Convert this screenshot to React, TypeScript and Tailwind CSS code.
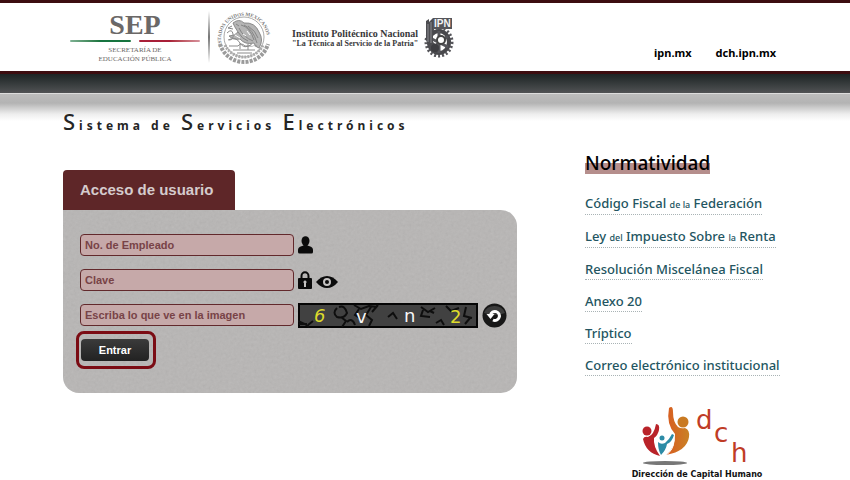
const topLinks = ["ipn.mx", "dch.ipn.mx"];

const fields = [
    { id: "empleado", label: "No. de Empleado", type: "text" },
    { id: "clave", label: "Clave", type: "password" },
    { id: "captcha", label: "Escriba lo que ve en la imagen", type: "text" },
];

const small = "text-[9px]";

const rules = [
    { id: "cff", text: <>Código Fiscal <span className={small}>de la</span> Federación</> },
    { id: "isr", text: <>Ley <span className={small}>del</span> Impuesto Sobre <span className={small}>la</span> Renta</> },
    { id: "rmf", text: <>Resolución Miscelánea Fiscal</> },
    { id: "anexo", text: <>Anexo 20</> },
    { id: "triptico", text: <>Tríptico</> },
    { id: "correo", text: <>Correo electrónico institucional</> },
];

function SepLogo() {
    return (
        <div className="flex w-[130px] flex-col items-center font-['Liberation_Serif',serif] text-[#6b6867]">
            <span className="text-[28px] leading-[30px] font-bold">SEP</span>
            <div className="mb-1 flex w-full gap-2">
                <span className="h-[2px] flex-1 rounded-full bg-linear-to-r from-[#7fb294] via-[#17743f] to-[#17743f]" />
                <span className="h-[2px] flex-1 rounded-full bg-linear-to-r from-[#a81f38] via-[#a81f38] to-[#d7929d]" />
            </div>
            <span className="text-[7px] leading-[9px]">SECRETARÍA DE</span>
            <span className="text-[7px] leading-[9px]">EDUCACIÓN PÚBLICA</span>
        </div>
    );
}

function Seal() {
    return (
        <svg viewBox="0 0 56 56" className="size-14" fill="none" stroke="#8a8a8a" aria-hidden="true">
            <defs>
                <path id="sealArc" d="M8.5 42 A23 23 0 1 1 47.5 42" />
            </defs>
            <text fill="#777" stroke="none" fontSize="5" fontWeight="bold" fontFamily="Liberation Serif, serif">
                <textPath href="#sealArc" startOffset="5">ESTADOS UNIDOS MEXICANOS</textPath>
            </text>
            <circle cx="28" cy="28" r="20" strokeWidth="1" stroke="#aaa" />
            {/* wreath */}
            <path d="M4 35 A25 25 0 0 0 52 35" strokeWidth="4" strokeDasharray="3 1.2" stroke="#9b9b9b" />
            <path d="M9 36 A21 21 0 0 0 47 36" strokeWidth="3" strokeDasharray="2 1" stroke="#aaa" />
            {/* eagle */}
            <path d="M17 14 q6 -5 11 0 q11 -1 15 9 q5 8 0 16 q-4 -1 -5 -5 q-9 2 -14 -4 q-7 1 -11 -3 q6 0 9 -4 q-4 -6 -5 -9z" fill="#b5b5b5" strokeWidth="1" />
            <path d="M16 17 l-4 2 5 1 M25 16 q9 2 13 15 M28 16 q9 4 13 18 M23 19 q4 9 14 13 M22 23 q4 7 10 9 M32 17 q8 5 10 12 M20 15 l3 2" strokeWidth="1" stroke="#858585" />
            <path d="M11 24 q5 -5 6 1 t-4 6 M12 31 q8 -4 12 3 t12 1 M13 37 h9 q3 -4 7 0 h12 M17 41 h22 M21 44 h15 M24 34 v6 M32 35 v6" strokeWidth="1" stroke="#8b8b8b" />
            <path d="M27 25 l3 2 M31 22 l3 4 M19 26 l5 3 M35 36 l4 2" stroke="#fff" strokeWidth="1" />
        </svg>
    );
}

function IpnGear() {
    return (
        <svg viewBox="0 0 30 42" className="h-[42px] w-[30px]" aria-hidden="true">
            <ellipse cx="15" cy="26" rx="13" ry="14" fill="none" stroke="#55555a" strokeWidth="3" strokeDasharray="2 2" />
            <ellipse cx="15" cy="26" rx="10" ry="11" fill="#fff" stroke="#48484c" strokeWidth="4" />
            <path d="M15 15 V37 M6 22 L24 31 M24 20 L7 33" stroke="#55555a" strokeWidth="3" />
            <circle cx="17" cy="24" r="4" fill="#fff" stroke="#444" strokeWidth="2" />
            <path d="M2 5 l3 -2 v3 l4 -4 v24 l5 4 -3 8 -6 -6 -3 -8z" fill="#4c4c50" />
            <path d="M4 8 v18 M7 6 v21" stroke="#8b8b90" />
            <circle cx="11" cy="32" r="4" fill="#3d3d41" />
            <rect x="9" y="2" width="19" height="11" fill="#55555a" />
            <text x="10" y="11" fontSize="10" fontWeight="bold" fontFamily="Liberation Sans, sans-serif" fill="#f4f4f4">IPN</text>
        </svg>
    );
}

function UserIcon() {
    return (
        <svg viewBox="0 0 15 18" className="h-[18px] w-[15px]" fill="#0b0b0b" aria-hidden="true">
            <ellipse cx="7.5" cy="5" rx="4" ry="4.800" />
            <path d="M5.500 8 h4 v1.500 l3.500 1.200 q2 .8 2 3 v2.300 q0 1.500 -1.500 1.500 h-12 q-1.500 0 -1.500 -1.500 v-2.300 q0 -2.200 2 -3 l3.500 -1.200z" />
        </svg>
    );
}

function LockIcon() {
    return (
        <svg viewBox="0 0 14 18" className="h-[18px] w-[14px]" aria-hidden="true">
            <path d="M3.500 9 V5 a3.500 3.800 0 0 1 7 0 V9" fill="none" stroke="#0b0b0b" strokeWidth="2" />
            <rect y="7" width="14" height="11" rx="1" fill="#0b0b0b" />
            <path d="M7 9.500 a1.600 1.600 0 0 1 1 2.800 V16 h-2 v-3.700 a1.600 1.600 0 0 1 1 -2.800z" fill="#c5c3c2" />
        </svg>
    );
}

function EyeIcon() {
    return (
        <svg viewBox="0 0 22 14" className="mt-1 h-[14px] w-[22px]" aria-hidden="true">
            <path d="M0 7 Q5 1 11 1 T22 7 Q17 13 11 13 T0 7z" fill="#0b0b0b" />
            <circle cx="11" cy="7" r="3" fill="none" stroke="#c5c3c2" strokeWidth="2" />
        </svg>
    );
}

function Captcha() {
    return (
        <svg viewBox="0 0 180 25" className="h-[25px] w-[180px]" role="img" aria-label="Imagen de verificación">
            <rect x="1" y="1" width="178" height="23" fill="#414141" stroke="#050505" strokeWidth="2" />
            <path
                d="M0 18 l7 3 4 3 M10 22 l5 -4 M39 5 q-5 5 0 9 q7 2 10 -4 q-2 -8 -8 -6 M43 14 l5 4 -4 6 M56 2 l7 4 8 -3 8 1 M61 6 l-4 6 6 4 M73 4 l-5 8 6 5 -3 6 M80 2 l-6 7 M49 19 q5 -5 8 3 M90 14 l5 -4 4 6 M123 4 l7 5 7 -4 M125 7 l-2 6 9 1 M132 8 l4 2 M148 3 l5 5 8 -3 M168 4 l-2 9 8 2 M172 15 l-5 6 M1 21 h8 M138 20 l5 -3 3 5"
                stroke="#0e0e0e"
                strokeWidth="2"
                fill="none"
            />
            <g fontFamily="DejaVu Sans, sans-serif" fontSize="18">
                <text x="16" y="19" fill="#dedb2c" fontStyle="italic">6</text>
                <text x="58" y="20" fill="#f8f8f8">v</text>
                <text x="106" y="19" fill="#f8f8f8">n</text>
                <text x="152" y="20" fill="#dedb2c">2</text>
            </g>
        </svg>
    );
}

function ReloadIcon() {
    return (
        <svg viewBox="0 0 25 25" className="size-[25px]" aria-hidden="true">
            <circle cx="12.5" cy="12.5" r="12" fill="#171717" />
            <path d="M2 10 a11 10 0 0 1 21 0 q-10 4 -21 0z" fill="#3c3c3c" />
            <path d="M11 17 a4.500 4.500 0 1 0 -2.500 -5" fill="none" stroke="#fff" strokeWidth="3" />
            <path d="M4.500 11 h8 l-4 5z" fill="#fff" />
        </svg>
    );
}

function DchLogo() {
    return (
        <svg viewBox="0 0 142 78" className="h-[78px] w-[142px]" role="img" aria-label="Dirección de Capital Humano">
            <defs>
                <linearGradient id="orange" x2="1">
                    <stop offset="0" stopColor="#d95b20" />
                    <stop offset="1" stopColor="#c98225" />
                </linearGradient>
            </defs>
            <ellipse cx="39" cy="61" rx="22" ry="2" fill="#777" />
            <path d="M43 6 q4 -3 4 4 q0 10 5 15 q3 2 7 1 q5 2 4 9 q-2 14 -23 18 q10 -8 9 -21 q-9 -10 -6 -26z" fill="url(#orange)" />
            <circle cx="57" cy="20" r="5.500" fill="#c97a22" />
            <path d="M30 22 q4 0 3 6 q-1 5 -5 8 q-1 8 6 18 q-14 -3 -17 -17 q1 -3 5 -2 q6 -2 8 -13z" fill="#b92329" />
            <circle cx="21" cy="29" r="4.500" fill="#b92329" />
            <path d="M46 32 l2 1 q-2 7 -7 9 q-1 6 -6 11 q-3 -5 -3 -13 q3 3 7 1 q4 -3 7 -9z" fill="#2c8ba6" />
            <circle cx="36" cy="36" r="2.500" fill="#2c8ba6" />
            <path d="M48 38 q0 10 -9 16" fill="none" stroke="#fff" strokeWidth="1" />
            <g fontFamily="DejaVu Sans, sans-serif" fontSize="26" fill="#bf3c26">
                <text x="70" y="27">d</text>
                <text x="88" y="40">c</text>
                <text x="105" y="60">h</text>
            </g>
            <text x="71" y="75" textAnchor="middle" fontFamily="DejaVu Sans, sans-serif" fontWeight="bold" fontSize="8" fill="#111">
                Dirección de Capital Humano
            </text>
        </svg>
    );
}

function LoginForm() {
    return (
        <section>
            <h2 className="flex h-10 w-[172px] items-center rounded-t bg-[#5e2628] pl-[17px] font-['Liberation_Sans',sans-serif] text-[15px] font-bold text-[#d5cbcd]">
                Acceso de usuario
            </h2>
            <form
                className="relative flex flex-col overflow-hidden rounded-2xl rounded-tl-none bg-[#b8b6b5] pt-[23px] pr-2 pb-6 pl-[17px] font-['Liberation_Sans',sans-serif]"
                onSubmit={(e) => e.preventDefault()}
            >
                {/* paper texture */}
                <svg className="pointer-events-none absolute inset-0 size-full opacity-15" aria-hidden="true">
                    <filter id="grain">
                        <feTurbulence type="fractalNoise" baseFrequency="0.35" numOctaves="2" />
                        <feColorMatrix type="saturate" values="0" />
                    </filter>
                    <rect width="100%" height="100%" filter="url(#grain)" />
                </svg>
                <div className="relative flex flex-col gap-[11px]">
                    {fields.map((field) => (
                        <div key={field.id} className="flex h-6 items-center gap-1">
                            <input
                                id={field.id}
                                type={field.type}
                                aria-label={field.label}
                                placeholder={field.label}
                                className="h-[22px] w-[214px] rounded border border-[#62292c] bg-[#c6a9a9] px-1 text-[11px] font-bold text-[#6f3034] placeholder:text-[#784347]"
                            />
                            {field.id === "empleado" && <UserIcon />}
                            {field.id === "clave" && (
                                <>
                                    <LockIcon />
                                    <EyeIcon />
                                </>
                            )}
                            {field.id === "captcha" && (
                                <>
                                    <Captcha />
                                    <button type="button" aria-label="Recargar imagen">
                                        <ReloadIcon />
                                    </button>
                                </>
                            )}
                        </div>
                    ))}
                </div>
                <div className="relative mt-1 -ml-1 flex w-20 rounded-lg border-3 border-[#7b0c14] px-[2px] py-[5px]">
                    <button type="submit" className="h-[22px] w-[68px] rounded bg-linear-to-b from-[#3b3b3b] to-[#222] text-[11px] font-bold text-white">
                        Entrar
                    </button>
                </div>
            </form>
        </section>
    );
}

export default function App() {
    return (
        <div className="min-h-screen bg-white font-['Noto_Sans',sans-serif] text-black">
            <header className="flex items-center justify-between border-t-3 border-b-3 border-[#3c0d10] pr-[74px] pl-[70px]">
                <div className="flex h-[68px] items-center">
                    <SepLogo />
                    <span className="ml-2 h-[52px] w-[2px] bg-linear-to-b from-white via-[#777] to-white" />
                    <div className="ml-[6px]">
                        <Seal />
                    </div>
                    <div className="ml-5 pt-1 text-right font-['Liberation_Serif',serif] font-bold text-[#38383a]">
                        <p className="text-[10px] leading-[10px]">Instituto Politécnico Nacional</p>
                        <p className="text-[8px] leading-[10px]">"La Técnica al Servicio de la Patria"</p>
                    </div>
                    <div className="ml-[6px]">
                        <IpnGear />
                    </div>
                </div>
                <nav className="flex gap-6 self-end pb-[10px] text-[11px] font-bold">
                    {topLinks.map((link) => (
                        <a key={link} href="#">{link}</a>
                    ))}
                </nav>
            </header>
            <div className="h-5 border-b border-[#ddd] bg-linear-to-b from-[#1d2424] to-[#515355]" />
            <div className="bg-[linear-gradient(to_bottom,#bdbdbd_0px,#b3b3b3_9px,#ededed_20px,#ffffff_27px)] pt-[13px] pl-[63px]">
                <h1 className="text-xs leading-7 font-bold tracking-[4px] text-[#252525]">
                    <span className="text-[22px] font-medium">S</span>istema de{" "}
                    <span className="text-[22px] font-medium">S</span>ervicios{" "}
                    <span className="text-[22px] font-medium">E</span>lectrónicos
                </h1>
            </div>
            <main className="grid grid-cols-[454fr_265fr] items-start gap-[68px] pt-3 pl-[63px]">
                <div className="pt-[18px]">
                    <LoginForm />
                </div>
                <aside className="flex flex-col">
                    <h2 className="self-start bg-linear-to-b from-transparent from-50% to-[#b58e8c] to-50% text-[19px] leading-[22px] font-medium">Normatividad</h2>
                    <ul className="mt-5 flex flex-col gap-3">
                        {rules.map((rule) => (
                            <li key={rule.id} className="flex">
                                <a href="#" className="border-b border-dotted border-[#a9b3b5] text-[13px] leading-[19px] font-medium text-[#235561]">{rule.text}</a>
                            </li>
                        ))}
                    </ul>
                    <div className="mt-[26px] ml-[41px]">
                        <DchLogo />
                    </div>
                </aside>
            </main>
        </div>
    );
}
